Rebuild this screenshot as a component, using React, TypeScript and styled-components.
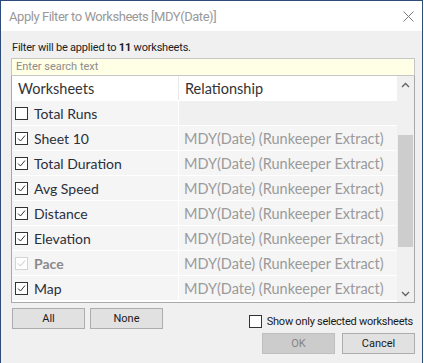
import React from "react";
import styled, { createGlobalStyle } from "styled-components";

const GlobalStyle = createGlobalStyle`
  html, body {
    margin: 0;
    padding: 0;
    background: #ffffff;
  }
`;

const uiFont = `"Roboto", "Noto Sans", sans-serif`;
const listFont = `"Lato", "Noto Sans", sans-serif`;

const Frame = styled.div`
  display: flex;
  flex-direction: column;
  box-sizing: border-box;
  width: 423px;
  height: 363px;
  border: 1px solid #2e4c7a;
  border-bottom: none;
  background: #f0f0f0;
  font-family: ${uiFont};
`;

const TitleBar = styled.div`
  display: flex;
  align-items: center;
  justify-content: space-between;
  height: 30px;
  padding: 0 8px 0 8px;
  background: #ffffff;
  color: #999999;
  font-size: 13px;
  letter-spacing: -0.45px;
`;

const Content = styled.div`
  display: flex;
  flex-direction: column;
  padding: 0 7px 0 10px;
`;

const Info = styled.div`
  margin: 9px 0 0 1px;
  height: 16px;
  line-height: 16px;
  font-size: 11px;
  letter-spacing: -0.2px;
  color: #1c1c24;

  b {
    font-weight: 700;
  }
`;

const Search = styled.div`
  box-sizing: border-box;
  height: 18px;
  margin-top: 2px;
  padding-left: 4px;
  border: 1px solid #c6c6c6;
  background: #ffffe6;
  color: #8c8c8c;
  font-size: 11px;
  line-height: 16px;
`;

const List = styled.div`
  display: flex;
  box-sizing: border-box;
  height: 227px;
  border: 1px solid #a9a9a9;
  border-top: none;
  background: #ffffff;
`;

const Table = styled.div`
  flex: 1;
  display: flex;
  flex-direction: column;
  font-family: ${listFont};
  font-size: 14.5px;
`;

const Row = styled.div<{ $header?: boolean }>`
  display: grid;
  grid-template-columns: 166px 1fr;
  column-gap: 1px;
  height: 25px;
  box-sizing: border-box;
  border-bottom: 1px solid #ffffff;
  background: ${(p) => (p.$header ? "#e8e8e8" : "#ffffff")};
`;

const Cell = styled.div<{ $header?: boolean; $muted?: boolean; $empty?: boolean }>`
  display: flex;
  align-items: center;
  gap: 6px;
  padding-left: ${(p) => (p.$header ? "6px" : "3px")};
  background: ${(p) => (p.$header ? "#ffffff" : p.$empty ? "#f0f0f0" : "#f5f5f5")};
  color: ${(p) => (p.$header ? "#333333" : p.$muted ? "#9a9a9a" : "#2a2f3a")};
  white-space: nowrap;
  overflow: hidden;
`;

const RelCell = styled(Cell)`
  padding-left: 5px;
`;

const Name = styled.span<{ $disabled?: boolean }>`
  font-size: 14px;
  color: ${(p) => (p.$disabled ? "#8a8a8a" : "inherit")};
  font-weight: ${(p) => (p.$disabled ? 700 : 400)};
`;

const Box = styled.span<{ $disabled?: boolean }>`
  display: inline-flex;
  align-items: center;
  justify-content: center;
  box-sizing: border-box;
  width: 13px;
  height: 13px;
  flex: none;
  border: 1px solid ${(p) => (p.$disabled ? "#d4d4d4" : "#333333")};
  background: #ffffff;
`;

const Scrollbar = styled.div`
  display: flex;
  flex-direction: column;
  width: 17px;
  background: #f0f0f0;
`;

const Arrow = styled.div`
  display: flex;
  align-items: center;
  justify-content: center;
  height: 17px;
`;

const Track = styled.div`
  flex: 1;
  display: flex;
  flex-direction: column;
  padding: 42px 1px 38px 1px;
`;

const Thumb = styled.div`
  flex: 1;
  background: #cdcdcd;
`;

const ButtonRow = styled.div`
  display: flex;
  align-items: center;
  gap: 5px;
  margin-top: 5px;
  padding-left: 1px;
`;

const Button = styled.button<{ $disabled?: boolean }>`
  box-sizing: border-box;
  width: 73px;
  height: 21px;
  padding: 0;
  border: 1px solid ${(p) => (p.$disabled ? "#bfbfbf" : "#adadad")};
  background: ${(p) => (p.$disabled ? "#cccccc" : "#e1e1e1")};
  color: ${(p) => (p.$disabled ? "#838383" : "#1a1a1a")};
  font-family: ${uiFont};
  font-size: 11px;
`;

const ShowOnly = styled.label`
  display: flex;
  align-items: center;
  gap: 5px;
  margin-left: auto;
  margin-top: 5px;
  margin-right: 2px;
  font-size: 11px;
  letter-spacing: -0.25px;
  color: #1a1a1a;
`;

const PlainBox = styled.span`
  box-sizing: border-box;
  width: 13px;
  height: 13px;
  border: 1px solid #333333;
  background: #ffffff;
`;

const FooterRow = styled.div`
  display: flex;
  justify-content: flex-end;
  gap: 7px;
  margin-top: 4px;
`;

const Check = ({ color }: { color: string }) => (
  <svg width="9" height="9" viewBox="0 0 9 9">
    <polyline points="1,4.5 3.5,7 8,1.5" fill="none" stroke={color} strokeWidth="1" />
  </svg>
);

const Chevron = ({ up }: { up?: boolean }) => (
  <svg width="9" height="6" viewBox="0 0 9 6">
    <polyline
      points={up ? "1,5 4.5,1.5 8,5" : "1,1 4.5,4.5 8,1"}
      fill="none"
      stroke="#606060"
      strokeWidth="1.3"
    />
  </svg>
);

const CloseIcon = () => (
  <svg width="11" height="11" viewBox="0 0 11 11">
    <path d="M0.5 0.5 L10.5 10.5 M10.5 0.5 L0.5 10.5" stroke="#7a7a7a" strokeWidth="1" />
  </svg>
);

interface Sheet {
  name: string;
  checked: boolean;
  disabled?: boolean;
  related: boolean;
}

const sheets: Sheet[] = [
  { name: "Total Runs", checked: false, related: false },
  { name: "Sheet 10", checked: true, related: true },
  { name: "Total Duration", checked: true, related: true },
  { name: "Avg Speed", checked: true, related: true },
  { name: "Distance", checked: true, related: true },
  { name: "Elevation", checked: true, related: true },
  { name: "Pace", checked: true, disabled: true, related: true },
  { name: "Map", checked: true, related: true },
];

const App: React.FC = () => {
  return (
    <>
      <GlobalStyle />
      <Frame>
        <TitleBar>
          <span>Apply Filter to Worksheets [MDY(Date)]</span>
          <CloseIcon />
        </TitleBar>
        <Content>
          <Info>
            Filter will be applied to <b>11</b> worksheets.
          </Info>
          <Search>Enter search text</Search>
          <List>
            <Table>
              <Row $header>
                <Cell $header>Worksheets</Cell>
                <Cell $header>Relationship</Cell>
              </Row>
              {sheets.map((s) => (
                <Row key={s.name}>
                  <Cell>
                    <Box $disabled={s.disabled}>
                      {s.checked ? <Check color={s.disabled ? "#c8c8c8" : "#333333"} /> : null}
                    </Box>
                    <Name $disabled={s.disabled}>{s.name}</Name>
                  </Cell>
                  <RelCell $muted $empty={!s.related}>
                    {s.related ? "MDY(Date) (Runkeeper Extract)" : ""}
                  </RelCell>
                </Row>
              ))}
            </Table>
            <Scrollbar>
              <Arrow>
                <Chevron up />
              </Arrow>
              <Track>
                <Thumb />
              </Track>
              <Arrow>
                <Chevron />
              </Arrow>
            </Scrollbar>
          </List>
          <ButtonRow>
            <Button>All</Button>
            <Button>None</Button>
            <ShowOnly>
              <PlainBox />
              Show only selected worksheets
            </ShowOnly>
          </ButtonRow>
          <FooterRow>
            <Button $disabled>OK</Button>
            <Button>Cancel</Button>
          </FooterRow>
        </Content>
      </Frame>
    </>
  );
};

export default App;
